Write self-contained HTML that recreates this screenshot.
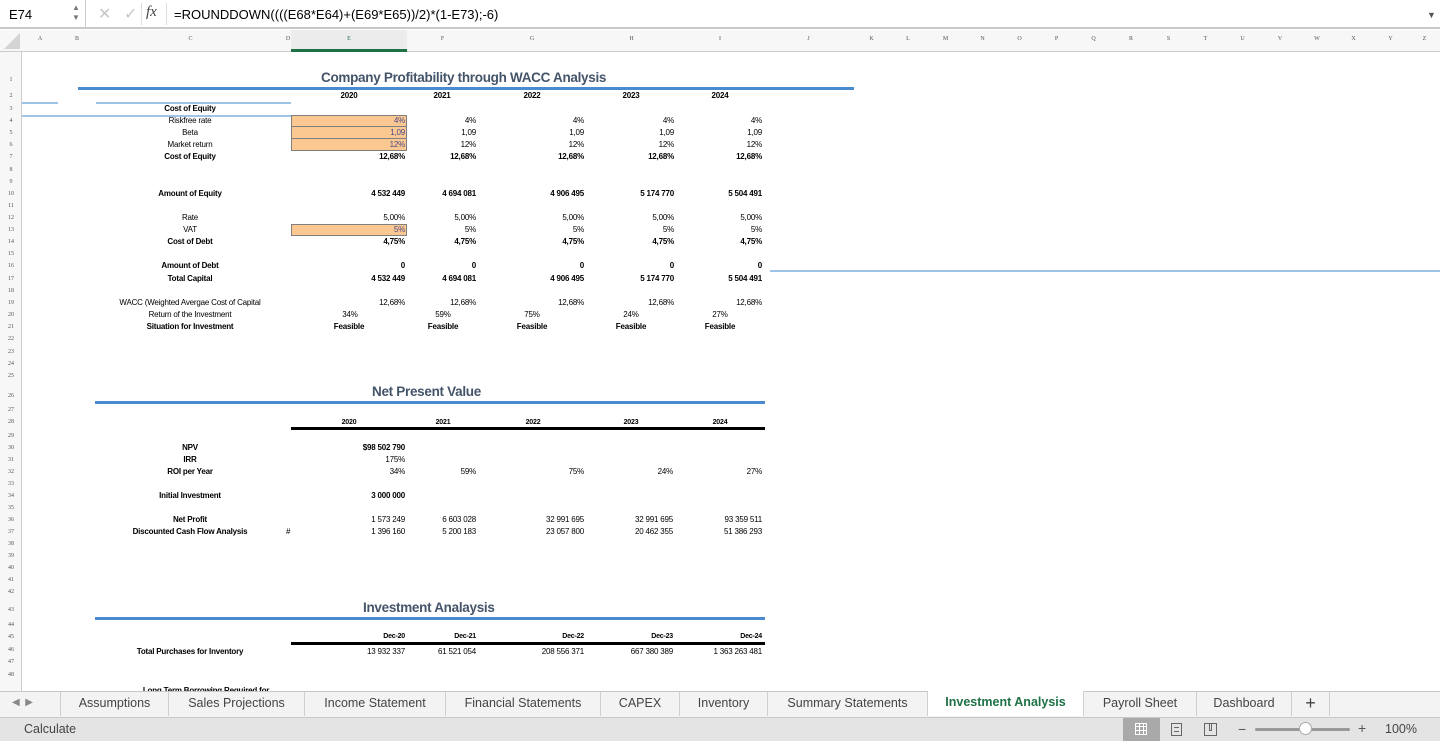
<!DOCTYPE html>
<html><head><meta charset="utf-8"><style>
*{margin:0;padding:0;box-sizing:border-box}
body{width:1440px;height:741px;overflow:hidden;background:#fff;font-family:"Liberation Sans",sans-serif;position:relative}
.a{position:absolute;white-space:nowrap}
.t{position:absolute;white-space:nowrap;font-size:8px;line-height:10px;color:#000;letter-spacing:-0.2px}
.b{font-weight:bold}
.c{width:180px;margin-left:-90px;text-align:center}
.r{width:120px;margin-left:-120px;text-align:right}
.rn{position:absolute;left:0;width:22px;text-align:center;font-size:6px;line-height:8px;color:#555;font-family:"Liberation Serif",serif}
.ch{position:absolute;top:36px;font-size:6px;color:#555;font-family:"Liberation Serif",serif;text-align:center}
.tab{position:absolute;top:692px;height:24px;line-height:22px;font-size:12.5px;color:#444;text-align:center;border-right:1px solid #d0d0d0}
.ti{font-size:13.5px;font-weight:bold;color:#44546a;letter-spacing:-0.3px}
</style></head><body>
<!-- formula bar -->
<div class="a" style="left:0;top:0;width:1440px;height:29px;background:#fff;border-bottom:2px solid #c8c8c8"></div>
<div class="a" style="left:0;top:0;width:86px;height:28px;border-right:1px solid #ccc"></div>
<div class="a" style="left:9px;top:7px;font-size:13px;color:#000">E74</div>
<div class="a" style="left:72px;top:3px;font-size:8px;color:#777;line-height:10px">▲<br>▼</div>
<div class="a" style="left:98px;top:4px;font-size:16px;color:#c8c8c8">✕</div>
<div class="a" style="left:124px;top:4px;font-size:16px;color:#c8c8c8">✓</div>
<div class="a" style="left:141px;top:3px;width:1px;height:22px;background:#ddd"></div>
<div class="a" style="left:146px;top:4px;font-size:15px;font-style:italic;font-family:'Liberation Serif',serif;color:#444">fx</div>
<div class="a" style="left:166px;top:3px;width:1px;height:22px;background:#ddd"></div>
<div class="a" style="left:174px;top:7px;font-size:13px;color:#000">=ROUNDDOWN((((E68*E64)+(E69*E65))/2)*(1-E73);-6)</div>
<div class="a" style="left:1427px;top:10px;font-size:9px;color:#555">▼</div>
<!-- column headers -->
<div class="a" style="left:0;top:30px;width:1440px;height:22px;background:#f7f7f7;border-bottom:1px solid #ccc"></div>
<div class="a" style="left:4px;top:33px;width:0;height:0;border-left:16px solid transparent;border-bottom:16px solid #d4d4d4"></div>
<div class="a" style="left:291px;top:30px;width:116px;height:22px;background:#ececec"></div>
<div class="a" style="left:291px;top:49px;width:116px;height:3px;background:#1e7145"></div>
<div class="ch" style="left:22px;width:36px">A</div>
<div class="ch" style="left:58px;width:38px">B</div>
<div class="ch" style="left:96px;width:189px">C</div>
<div class="ch" style="left:285px;width:6px">D</div>
<div class="ch" style="left:291px;width:116px;color:#1e7145">E</div>
<div class="ch" style="left:407px;width:71px">F</div>
<div class="ch" style="left:478px;width:108px">G</div>
<div class="ch" style="left:586px;width:91px">H</div>
<div class="ch" style="left:677px;width:86px">I</div>
<div class="ch" style="left:763px;width:91px">J</div>
<div class="ch" style="left:854px;width:35px">K</div>
<div class="ch" style="left:889px;width:38px">L</div>
<div class="ch" style="left:927px;width:37px">M</div>
<div class="ch" style="left:964px;width:37px">N</div>
<div class="ch" style="left:1001px;width:37px">O</div>
<div class="ch" style="left:1038px;width:37px">P</div>
<div class="ch" style="left:1075px;width:37px">Q</div>
<div class="ch" style="left:1112px;width:38px">R</div>
<div class="ch" style="left:1150px;width:37px">S</div>
<div class="ch" style="left:1187px;width:37px">T</div>
<div class="ch" style="left:1224px;width:37px">U</div>
<div class="ch" style="left:1261px;width:38px">V</div>
<div class="ch" style="left:1299px;width:36px">W</div>
<div class="ch" style="left:1335px;width:37px">X</div>
<div class="ch" style="left:1372px;width:37px">Y</div>
<div class="ch" style="left:1409px;width:31px">Z</div>
<!-- separators in header -->
<div class="a" style="left:22px;top:30px;width:1418px;height:22px;background:repeating-linear-gradient(90deg,transparent 0,transparent 0)"></div>
<!-- row header column -->
<div class="a" style="left:0;top:52px;width:22px;height:640px;background:#f7f7f7;border-right:1px solid #ccc"></div>
<div class="rn" style="top:76px">1</div><div class="rn" style="top:92px">2</div><div class="rn" style="top:105px">3</div>
<div class="rn" style="top:117px">4</div><div class="rn" style="top:129px">5</div><div class="rn" style="top:141px">6</div>
<div class="rn" style="top:153px">7</div><div class="rn" style="top:166px">8</div><div class="rn" style="top:178px">9</div>
<div class="rn" style="top:190px">10</div><div class="rn" style="top:202px">11</div><div class="rn" style="top:214px">12</div>
<div class="rn" style="top:226px">13</div><div class="rn" style="top:238px">14</div><div class="rn" style="top:250px">15</div>
<div class="rn" style="top:262px">16</div><div class="rn" style="top:275px">17</div><div class="rn" style="top:287px">18</div>
<div class="rn" style="top:299px">19</div><div class="rn" style="top:311px">20</div><div class="rn" style="top:323px">21</div>
<div class="rn" style="top:335px">22</div><div class="rn" style="top:348px">23</div><div class="rn" style="top:360px">24</div>
<div class="rn" style="top:372px">25</div><div class="rn" style="top:392px">26</div><div class="rn" style="top:406px">27</div>
<div class="rn" style="top:418px">28</div><div class="rn" style="top:432px">29</div><div class="rn" style="top:444px">30</div>
<div class="rn" style="top:456px">31</div><div class="rn" style="top:468px">32</div><div class="rn" style="top:480px">33</div>
<div class="rn" style="top:492px">34</div><div class="rn" style="top:504px">35</div><div class="rn" style="top:516px">36</div>
<div class="rn" style="top:528px">37</div><div class="rn" style="top:540px">38</div><div class="rn" style="top:552px">39</div>
<div class="rn" style="top:564px">40</div><div class="rn" style="top:576px">41</div><div class="rn" style="top:588px">42</div>
<div class="rn" style="top:606px">43</div><div class="rn" style="top:621px">44</div><div class="rn" style="top:633px">45</div>
<div class="rn" style="top:646px">46</div><div class="rn" style="top:658px">47</div><div class="rn" style="top:671px">48</div>

<!-- section 1 -->
<div class="a ti" style="left:321px;top:70px">Company Profitability through WACC Analysis</div>
<div class="a" style="left:78px;top:87px;width:776px;height:3px;background:#4a8bd0"></div>
<div class="a" style="left:22px;top:102px;width:36px;height:2px;background:#9dc3e6"></div>
<div class="a" style="left:96px;top:102px;width:195px;height:2px;background:#9dc3e6"></div>
<div class="a" style="left:22px;top:115px;width:269px;height:2px;background:#9dc3e6"></div>
<div class="a" style="left:770px;top:270px;width:670px;height:2px;background:#9dc3e6"></div>
<div class="a" style="left:291px;top:115px;width:116px;height:36px;background:#fcc891;border:1px solid #7f7f7f"></div>
<div class="a" style="left:291px;top:115px;width:116px;height:12px;border-bottom:1px solid #7f7f7f"></div>
<div class="a" style="left:291px;top:127px;width:116px;height:12px;border-bottom:1px solid #7f7f7f"></div>
<div class="a" style="left:291px;top:224px;width:116px;height:12px;background:#fcc891;border:1px solid #7f7f7f"></div>

<div class="t b c" style="left:349px;top:91px">2020</div><div class="t b c" style="left:442px;top:91px">2021</div>
<div class="t b c" style="left:532px;top:91px">2022</div><div class="t b c" style="left:631px;top:91px">2023</div><div class="t b c" style="left:720px;top:91px">2024</div>

<div class="t b c" style="left:190px;top:104px">Cost of Equity</div>
<div class="t c" style="left:190px;top:116px">Riskfree rate</div>
<div class="t c" style="left:190px;top:128px">Beta</div>
<div class="t c" style="left:190px;top:140px">Market return</div>
<div class="t b c" style="left:190px;top:152px">Cost of Equity</div>
<div class="t b c" style="left:190px;top:189px">Amount of Equity</div>
<div class="t c" style="left:190px;top:213px">Rate</div>
<div class="t c" style="left:190px;top:225px">VAT</div>
<div class="t b c" style="left:190px;top:237px">Cost of Debt</div>
<div class="t b c" style="left:190px;top:261px">Amount of Debt</div>
<div class="t b c" style="left:190px;top:274px">Total Capital</div>
<div class="t c" style="left:190px;top:298px">WACC (Weighted Avergae Cost of Capital</div>
<div class="t c" style="left:190px;top:310px">Return of the Investment</div>
<div class="t b c" style="left:190px;top:322px">Situation for Investment</div>

<!-- E -->
<div class="t r" style="left:405px;top:116px;color:#4a4a8a">4%</div>
<div class="t r" style="left:405px;top:128px;color:#4a4a8a">1,09</div>
<div class="t r" style="left:405px;top:140px;color:#4a4a8a">12%</div>
<div class="t r b" style="left:405px;top:152px">12,68%</div>
<div class="t r b" style="left:405px;top:189px">4 532 449</div>
<div class="t r" style="left:405px;top:213px">5,00%</div>
<div class="t r" style="left:405px;top:225px;color:#4a4a8a">5%</div>
<div class="t r b" style="left:405px;top:237px">4,75%</div>
<div class="t r b" style="left:405px;top:261px">0</div>
<div class="t r b" style="left:405px;top:274px">4 532 449</div>
<div class="t r" style="left:405px;top:298px">12,68%</div>
<div class="t c" style="left:350px;top:310px">34%</div>
<div class="t b c" style="left:349px;top:322px">Feasible</div>
<!-- F -->
<div class="t r" style="left:476px;top:116px">4%</div><div class="t r" style="left:476px;top:128px">1,09</div>
<div class="t r" style="left:476px;top:140px">12%</div><div class="t r b" style="left:476px;top:152px">12,68%</div>
<div class="t r b" style="left:476px;top:189px">4 694 081</div><div class="t r" style="left:476px;top:213px">5,00%</div>
<div class="t r" style="left:476px;top:225px">5%</div><div class="t r b" style="left:476px;top:237px">4,75%</div>
<div class="t r b" style="left:476px;top:261px">0</div><div class="t r b" style="left:476px;top:274px">4 694 081</div>
<div class="t r" style="left:476px;top:298px">12,68%</div>
<div class="t c" style="left:443px;top:310px">59%</div><div class="t b c" style="left:443px;top:322px">Feasible</div>
<!-- G -->
<div class="t r" style="left:584px;top:116px">4%</div><div class="t r" style="left:584px;top:128px">1,09</div>
<div class="t r" style="left:584px;top:140px">12%</div><div class="t r b" style="left:584px;top:152px">12,68%</div>
<div class="t r b" style="left:584px;top:189px">4 906 495</div><div class="t r" style="left:584px;top:213px">5,00%</div>
<div class="t r" style="left:584px;top:225px">5%</div><div class="t r b" style="left:584px;top:237px">4,75%</div>
<div class="t r b" style="left:584px;top:261px">0</div><div class="t r b" style="left:584px;top:274px">4 906 495</div>
<div class="t r" style="left:584px;top:298px">12,68%</div>
<div class="t c" style="left:532px;top:310px">75%</div><div class="t b c" style="left:532px;top:322px">Feasible</div>
<!-- H -->
<div class="t r" style="left:674px;top:116px">4%</div><div class="t r" style="left:674px;top:128px">1,09</div>
<div class="t r" style="left:674px;top:140px">12%</div><div class="t r b" style="left:674px;top:152px">12,68%</div>
<div class="t r b" style="left:674px;top:189px">5 174 770</div><div class="t r" style="left:674px;top:213px">5,00%</div>
<div class="t r" style="left:674px;top:225px">5%</div><div class="t r b" style="left:674px;top:237px">4,75%</div>
<div class="t r b" style="left:674px;top:261px">0</div><div class="t r b" style="left:674px;top:274px">5 174 770</div>
<div class="t r" style="left:674px;top:298px">12,68%</div>
<div class="t c" style="left:631px;top:310px">24%</div><div class="t b c" style="left:631px;top:322px">Feasible</div>
<!-- I -->
<div class="t r" style="left:762px;top:116px">4%</div><div class="t r" style="left:762px;top:128px">1,09</div>
<div class="t r" style="left:762px;top:140px">12%</div><div class="t r b" style="left:762px;top:152px">12,68%</div>
<div class="t r b" style="left:762px;top:189px">5 504 491</div><div class="t r" style="left:762px;top:213px">5,00%</div>
<div class="t r" style="left:762px;top:225px">5%</div><div class="t r b" style="left:762px;top:237px">4,75%</div>
<div class="t r b" style="left:762px;top:261px">0</div><div class="t r b" style="left:762px;top:274px">5 504 491</div>
<div class="t r" style="left:762px;top:298px">12,68%</div>
<div class="t c" style="left:720px;top:310px">27%</div><div class="t b c" style="left:720px;top:322px">Feasible</div>

<!-- NPV -->
<div class="a ti" style="left:372px;top:384px">Net Present Value</div>
<div class="a" style="left:95px;top:401px;width:670px;height:3px;background:#4a8bd0"></div>
<div class="a" style="left:291px;top:427px;width:474px;height:3px;background:#000"></div>
<div class="t b c" style="left:349px;top:418px;font-size:7px">2020</div><div class="t b c" style="left:443px;top:418px;font-size:7px">2021</div>
<div class="t b c" style="left:533px;top:418px;font-size:7px">2022</div><div class="t b c" style="left:631px;top:418px;font-size:7px">2023</div><div class="t b c" style="left:720px;top:418px;font-size:7px">2024</div>
<div class="t b c" style="left:190px;top:443px">NPV</div>
<div class="t b c" style="left:190px;top:455px">IRR</div>
<div class="t b c" style="left:190px;top:467px">ROI per Year</div>
<div class="t b c" style="left:190px;top:491px">Initial Investment</div>
<div class="t b c" style="left:190px;top:515px">Net Profit</div>
<div class="t b c" style="left:190px;top:527px">Discounted Cash Flow Analysis</div>
<div class="t" style="left:286px;top:527px">#</div>
<div class="t r b" style="left:405px;top:443px">$98 502 790</div>
<div class="t r" style="left:405px;top:455px">175%</div>
<div class="t r" style="left:405px;top:467px">34%</div>
<div class="t r b" style="left:405px;top:491px">3 000 000</div>
<div class="t r" style="left:405px;top:515px">1 573 249</div>
<div class="t r" style="left:405px;top:527px">1 396 160</div>
<div class="t r" style="left:476px;top:467px">59%</div><div class="t r" style="left:476px;top:515px">6 603 028</div><div class="t r" style="left:476px;top:527px">5 200 183</div>
<div class="t r" style="left:584px;top:467px">75%</div><div class="t r" style="left:584px;top:515px">32 991 695</div><div class="t r" style="left:584px;top:527px">23 057 800</div>
<div class="t r" style="left:673px;top:467px">24%</div><div class="t r" style="left:673px;top:515px">32 991 695</div><div class="t r" style="left:673px;top:527px">20 462 355</div>
<div class="t r" style="left:762px;top:467px">27%</div><div class="t r" style="left:762px;top:515px">93 359 511</div><div class="t r" style="left:762px;top:527px">51 386 293</div>

<!-- Investment -->
<div class="a ti" style="left:363px;top:600px">Investment Analaysis</div>
<div class="a" style="left:95px;top:617px;width:670px;height:3px;background:#4a8bd0"></div>
<div class="a" style="left:291px;top:642px;width:474px;height:3px;background:#000"></div>
<div class="t r b" style="left:405px;top:632px;font-size:7px">Dec-20</div>
<div class="t r b" style="left:476px;top:632px;font-size:7px">Dec-21</div>
<div class="t r b" style="left:584px;top:632px;font-size:7px">Dec-22</div>
<div class="t r b" style="left:673px;top:632px;font-size:7px">Dec-23</div>
<div class="t r b" style="left:762px;top:632px;font-size:7px">Dec-24</div>
<div class="t b c" style="left:190px;top:647px">Total Purchases for Inventory</div>
<div class="t r" style="left:405px;top:647px">13 932 337</div>
<div class="t r" style="left:476px;top:647px">61 521 054</div>
<div class="t r" style="left:584px;top:647px">208 556 371</div>
<div class="t r" style="left:673px;top:647px">667 380 389</div>
<div class="t r" style="left:762px;top:647px">1 363 263 481</div>
<div class="t b c" style="left:206px;top:686px">Long Term Borrowing Required for</div>

<!-- tab bar -->
<div class="a" style="left:0;top:691px;width:1440px;height:26px;background:#f3f3f3;border-top:1px solid #c8c8c8"></div>
<div class="a" style="left:12px;top:697px;font-size:10px;color:#888">◀&nbsp;&nbsp;▶</div>
<div class="tab" style="left:60px;width:109px;border-left:1px solid #d0d0d0">Assumptions</div>
<div class="tab" style="left:169px;width:136px">Sales Projections</div>
<div class="tab" style="left:305px;width:141px">Income Statement</div>
<div class="tab" style="left:446px;width:155px">Financial Statements</div>
<div class="tab" style="left:601px;width:79px">CAPEX</div>
<div class="tab" style="left:680px;width:88px">Inventory</div>
<div class="tab" style="left:768px;width:160px">Summary Statements</div>
<div class="tab" style="left:928px;width:156px;background:#fff;color:#1e7145;font-weight:bold;height:25px;top:691px">Investment Analysis</div>
<div class="tab" style="left:1084px;width:113px">Payroll Sheet</div>
<div class="tab" style="left:1197px;width:95px">Dashboard</div>
<div class="tab" style="left:1292px;width:38px;font-size:18px;color:#444">+</div>
<!-- status bar -->
<div class="a" style="left:0;top:717px;width:1440px;height:24px;background:#e4e4e4;border-top:1px solid #c8c8c8"></div>
<div class="a" style="left:24px;top:722px;font-size:12.5px;color:#444">Calculate</div>
<div class="a" style="left:1123px;top:718px;width:37px;height:23px;background:#a9a9a9"></div>
<div class="a" style="left:1135px;top:723px;width:12px;height:12px;border:1px solid #fff;background:repeating-linear-gradient(90deg,transparent 0 3px,#fff 3px 4px),repeating-linear-gradient(0deg,#a9a9a9 0 3px,#fff 3px 4px)"></div>
<div class="a" style="left:1171px;top:723px;width:11px;height:13px;border:1px solid #666"></div>
<div class="a" style="left:1174px;top:727px;width:5px;height:5px;border-top:1px solid #666;border-bottom:1px solid #666"></div>
<div class="a" style="left:1204px;top:723px;width:13px;height:13px;border:1px solid #666"></div>
<div class="a" style="left:1209px;top:723px;width:3px;height:8px;border:1px solid #666;border-top:none"></div>
<div class="a" style="left:1238px;top:721px;font-size:14px;color:#555">−</div>
<div class="a" style="left:1255px;top:728px;width:95px;height:3px;background:#999;border-radius:2px"></div>
<div class="a" style="left:1299px;top:722px;width:13px;height:13px;border-radius:50%;background:#fff;border:1px solid #aaa"></div>
<div class="a" style="left:1358px;top:720px;font-size:14px;color:#555">+</div>
<div class="a" style="left:1385px;top:722px;font-size:12.5px;color:#444">100%</div>
</body></html>
